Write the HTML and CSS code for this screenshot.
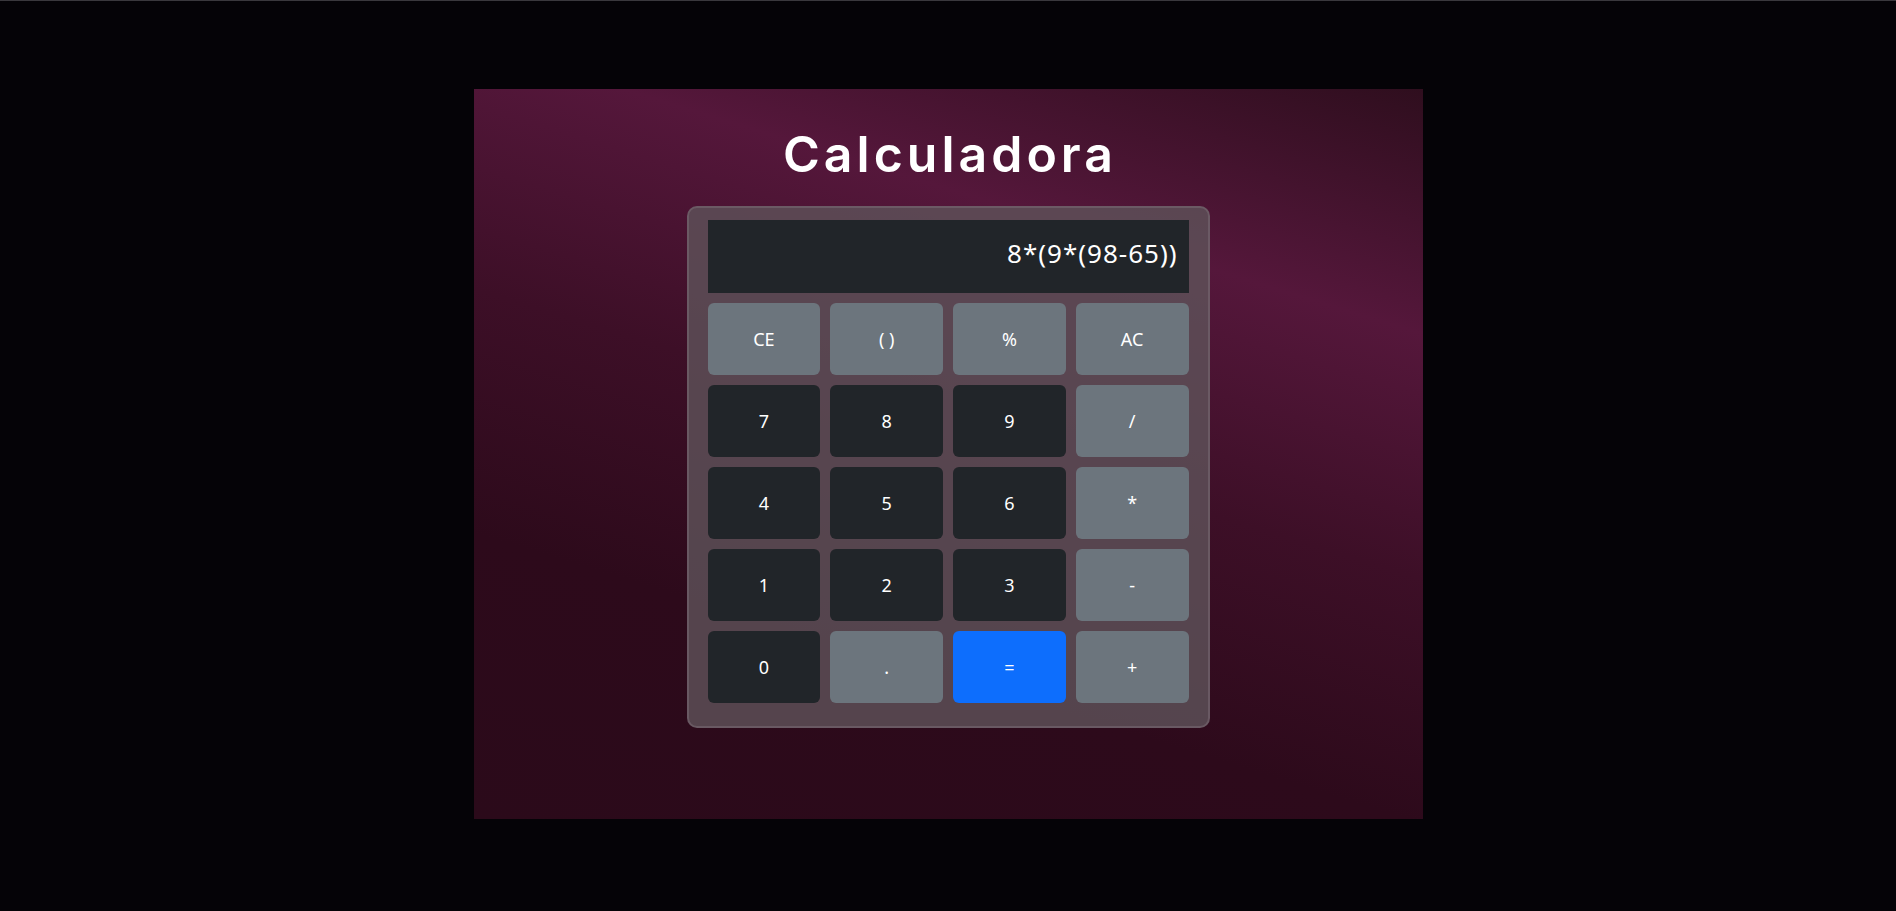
FILE: index.html
```html
<!DOCTYPE html>
<html lang="pt">
<head>
<meta charset="utf-8">
<title>Calculadora</title>
<link rel="stylesheet" href="styles.css">
</head>
<body>
<main class="panel">
  <h1 class="title">Calculadora</h1>
  <div class="calc">
    <div class="display">8*(9*(98-65))</div>
    <div class="keys">
      <button class="key gray">CE</button>
      <button class="key gray">( )</button>
      <button class="key gray">%</button>
      <button class="key gray">AC</button>
      <button class="key dark">7</button>
      <button class="key dark">8</button>
      <button class="key dark">9</button>
      <button class="key gray">/</button>
      <button class="key dark">4</button>
      <button class="key dark">5</button>
      <button class="key dark">6</button>
      <button class="key gray">*</button>
      <button class="key dark">1</button>
      <button class="key dark">2</button>
      <button class="key dark">3</button>
      <button class="key gray">-</button>
      <button class="key dark">0</button>
      <button class="key gray">.</button>
      <button class="key blue">=</button>
      <button class="key gray">+</button>
    </div>
  </div>
</main>
</body>
</html>
```
FILE: styles.css
```css
html {
  background: #050307;
}
body {
  margin: 0;
  min-height: 910px;
  border-top: 1px solid #3a383d;
  padding-top: 88px;
  box-sizing: border-box;
  font-family: "Noto Sans", "Open Sans", sans-serif;
  color: #fff;
}
.panel {
  width: 949px;
  height: 730px;
  margin: 0 auto;
  box-sizing: border-box;
  padding-top: 36px;
  display: flex;
  flex-direction: column;
  align-items: center;
  background: linear-gradient(197deg, #2f0e1e 0%, #55173b 24%, #3d0f27 48%, #2d0a1b 72%, #2b0a1a 100%);
}
.title {
  margin: 0;
  padding-left: 4px;
  font-family: "Inter", "Lato", sans-serif;
  font-weight: 600;
  font-size: 50px;
  line-height: 58px;
  letter-spacing: 4px;
  color: #fff;
}
.calc {
  margin-top: 23px;
  width: 523px;
  box-sizing: border-box;
  padding: 12px 19px 23px;
  border: 2px solid rgba(120, 105, 114, 0.6);
  border-radius: 10px;
  background: rgba(94, 82, 89, 0.82);
}
.display {
  height: 73px;
  background: #212529;
  box-sizing: border-box;
  padding: 0 11px 8px;
  display: flex;
  align-items: center;
  justify-content: flex-end;
  font-size: 26px;
  letter-spacing: 1px;
  color: #fff;
}
.keys {
  margin-top: 10px;
  display: grid;
  grid-template-columns: repeat(4, 1fr);
  grid-auto-rows: 72px;
  gap: 10px;
}
.key {
  border: none;
  border-radius: 6px;
  font-family: "Noto Sans", "Open Sans", sans-serif;
  font-size: 18px;
  color: #fff;
  padding: 0;
}
.gray { background: #6c757d; }
.dark { background: #212529; }
.blue { background: #0d6efd; }
```
